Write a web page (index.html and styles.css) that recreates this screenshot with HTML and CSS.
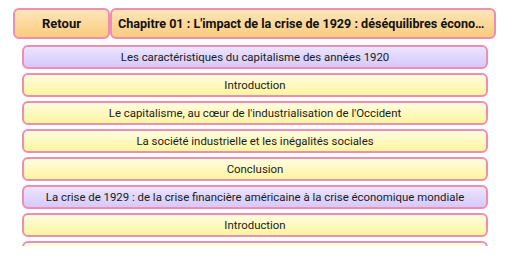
FILE: index.html
```html
<!DOCTYPE html>
<html>
<head>
    <title>Chapitre 01</title>
    <link rel="stylesheet" href="styles.css">
</head>
<body>
    <div class="top-bar">
        <button class="btn-back">Retour</button>
        <div class="chapter-title">Chapitre 01 : L'impact de la crise de 1929 : déséquilibres économiques et sociaux</div>
    </div>

    <div class="lesson-list">
        <div class="item part">Les caractéristiques du capitalisme des années 1920</div>
        <div class="item">Introduction</div>
        <div class="item">Le capitalisme, au cœur de l'industrialisation de l'Occident</div>
        <div class="item">La société industrielle et les inégalités sociales</div>
        <div class="item">Conclusion</div>
        <div class="item part">La crise de 1929 : de la crise financière américaine à la crise économique mondiale</div>
        <div class="item">Introduction</div>
        <div class="item">La crise financière</div>
    </div>
</body>
</html>
```

FILE: styles.css
```css
body {
    margin: 0;
    padding: 0;
    background-color: white;
    font-family: Roboto, "Noto Sans", sans-serif;
    color: #1a1a1a;
}

.top-bar {
    display: flex;
    padding: 8px 16px 0 13px;
}

.btn-back,
.chapter-title {
    height: 31px;
    box-sizing: border-box;
    border: 2px solid #f08db0;
    border-radius: 6px;
    background: linear-gradient(to bottom, #fde6b8, #fbcb7e);
    font-family: Roboto, sans-serif;
    font-size: 12.6px;
    font-weight: bold;
    color: #111;
}

.btn-back {
    width: 97px;
    padding: 0;
    font-size: 13px;
}

.chapter-title {
    flex: 1;
    padding: 0 6px;
    line-height: 27px;
    white-space: nowrap;
    overflow: hidden;
    text-overflow: ellipsis;
}

.lesson-list {
    margin: 6px 24px 0 22px;
    height: 201px;
    overflow: hidden;
    display: flex;
    flex-direction: column;
    gap: 4px;
}

.item {
    flex-shrink: 0;
    height: 24px;
    box-sizing: border-box;
    border: 2px solid #f08db0;
    border-radius: 6px;
    background: linear-gradient(to bottom, #fffde2, #fff59e);
    font-size: 11.4px;
    line-height: 20px;
    text-align: center;
    white-space: nowrap;
    overflow: hidden;
}

.item.part {
    background: linear-gradient(to bottom, #ebe4ff, #d6c9fb);
}
```
